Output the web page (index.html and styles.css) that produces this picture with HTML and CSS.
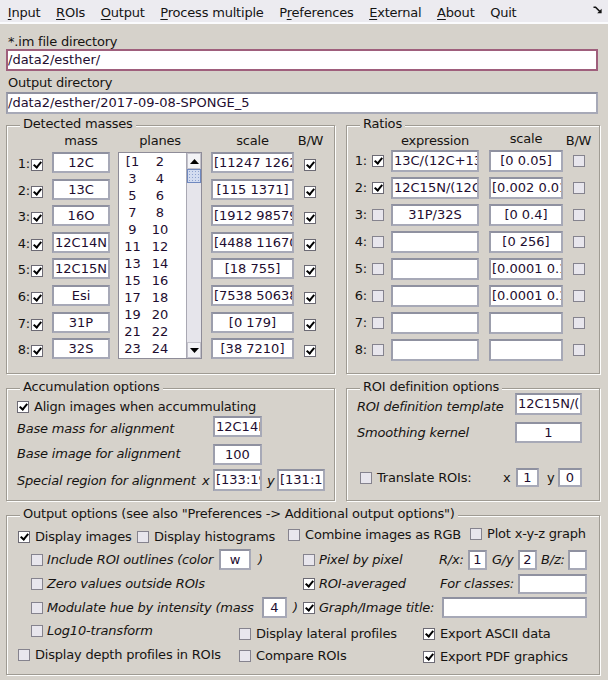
FILE: index.html
```html
<!DOCTYPE html>
<html>
<head>
<meta charset="utf-8">
<link rel="stylesheet" href="styles.css">
</head>
<body>
<div class="menubar">
  <span class="mi"><u>I</u>nput</span>
  <span class="mi"><u>R</u>OIs</span>
  <span class="mi"><u>O</u>utput</span>
  <span class="mi"><u>P</u>rocess multiple</span>
  <span class="mi">P<u>r</u>eferences</span>
  <span class="mi"><u>E</u>xternal</span>
  <span class="mi"><u>A</u>bout</span>
  <span class="mi">Quit</span>
  <svg class="dock" width="10" height="8" viewBox="0 0 10 8"><path d="M0.5 1.2H2.6L6.6 5.2" fill="none" stroke="#111" stroke-width="1.6"/><path d="M4.2 7.2H8.6V2.8Z" fill="#111"/></svg>
</div>
<div class="main">
  <div class="lbl">*.im file directory</div>
  <div class="edit wide focus">/data2/esther/</div>
  <div class="lbl lbl2">Output directory</div>
  <div class="edit wide">/data2/esther/2017-09-08-SPONGE_5</div>

  <div class="frames">
    <div class="frame masses">
      <span class="legend">Detected masses</span>
      <div class="mgrid">
        <div class="hsp"></div>
        <div class="hd w58">mass</div>
        <div class="hd w84">planes</div>
        <div class="hd w83">scale</div>
        <div class="hd w13">B/W</div>

        <div class="plist">
          <div class="pitems">
            <div class="pl"><span>[1</span><span>2</span></div>
            <div class="pl"><span>3</span><span>4</span></div>
            <div class="pl"><span>5</span><span>6</span></div>
            <div class="pl"><span>7</span><span>8</span></div>
            <div class="pl"><span>9</span><span>10</span></div>
            <div class="pl"><span>11</span><span>12</span></div>
            <div class="pl"><span>13</span><span>14</span></div>
            <div class="pl"><span>15</span><span>16</span></div>
            <div class="pl"><span>17</span><span>18</span></div>
            <div class="pl"><span>19</span><span>20</span></div>
            <div class="pl"><span>21</span><span>22</span></div>
            <div class="pl"><span>23</span><span>24</span></div>
          </div>
          <div class="sb">
            <div class="sbtn"><svg width="9" height="5" viewBox="0 0 9 5"><path d="M0 5H9L4.5 0Z" fill="#000"/></svg></div>
            <div class="thumb"></div>
            <div class="track"></div>
            <div class="sbtn"><svg width="9" height="5" viewBox="0 0 9 5"><path d="M0 0H9L4.5 5Z" fill="#000"/></svg></div>
          </div>
        </div>

        <div class="rl">1:</div><div class="cb on mcb"></div><div class="edit w58">12C</div><div class="edit w83">[11247 1262</div><div class="cb on mcb"></div>
        <div class="rl">2:</div><div class="cb on mcb"></div><div class="edit w58">13C</div><div class="edit w83">[115 1371]</div><div class="cb on mcb"></div>
        <div class="rl">3:</div><div class="cb on mcb"></div><div class="edit w58">16O</div><div class="edit w83">[1912 98579</div><div class="cb on mcb"></div>
        <div class="rl">4:</div><div class="cb on mcb"></div><div class="edit w58">12C14N</div><div class="edit w83">[4488 11670</div><div class="cb on mcb"></div>
        <div class="rl">5:</div><div class="cb on mcb"></div><div class="edit w58">12C15N</div><div class="edit w83">[18 755]</div><div class="cb on mcb"></div>
        <div class="rl">6:</div><div class="cb on mcb"></div><div class="edit w58">Esi</div><div class="edit w83">[7538 50638</div><div class="cb on mcb"></div>
        <div class="rl">7:</div><div class="cb on mcb"></div><div class="edit w58">31P</div><div class="edit w83">[0 179]</div><div class="cb on mcb"></div>
        <div class="rl">8:</div><div class="cb on mcb"></div><div class="edit w58">32S</div><div class="edit w83">[38 7210]</div><div class="cb on mcb"></div>
      </div>
    </div>

    <div class="frame ratios">
      <span class="legend">Ratios</span>
      <div class="rgrid">
        <div class="hsp"></div>
        <div class="hd w88">expression</div>
        <div class="hd w74 hup">scale</div>
        <div class="hd w13">B/W</div>

        <div class="rl rrl">1:</div><div class="cb on rcb"></div><div class="edit w88 h22">13C/(12C+13</div><div class="edit w74 h22">[0 0.05]</div><div class="cb rcb"></div>
        <div class="rl rrl">2:</div><div class="cb on rcb"></div><div class="edit w88 h22">12C15N/(12C</div><div class="edit w74 h22">[0.002 0.01</div><div class="cb rcb"></div>
        <div class="rl rrl">3:</div><div class="cb rcb"></div><div class="edit w88 h22">31P/32S</div><div class="edit w74 h22">[0 0.4]</div><div class="cb rcb"></div>
        <div class="rl rrl">4:</div><div class="cb rcb"></div><div class="edit w88 h22"></div><div class="edit w74 h22">[0 256]</div><div class="cb rcb"></div>
        <div class="rl rrl">5:</div><div class="cb rcb"></div><div class="edit w88 h22"></div><div class="edit w74 h22">[0.0001 0.1</div><div class="cb rcb"></div>
        <div class="rl rrl">6:</div><div class="cb rcb"></div><div class="edit w88 h22"></div><div class="edit w74 h22">[0.0001 0.1</div><div class="cb rcb"></div>
        <div class="rl rrl">7:</div><div class="cb rcb"></div><div class="edit w88 h22"></div><div class="edit w74 h22"></div><div class="cb rcb"></div>
        <div class="rl rrl">8:</div><div class="cb rcb"></div><div class="edit w88 h22"></div><div class="edit w74 h22"></div><div class="cb rcb"></div>
      </div>
    </div>
  </div>

  <div class="frames lower">
    <div class="frame accum">
      <span class="legend">Accumulation options</span>
      <div class="arow ra">
        <div class="chk"><div class="cb on"></div><span>Align images when accummulating</span></div>
      </div>
      <div class="arow">
        <div class="al pt3">Base mass for alignment</div>
        <div class="edit w49">12C14N</div>
      </div>
      <div class="arow rc">
        <div class="al pb3">Base image for alignment</div>
        <div class="edit w49">100</div>
      </div>
      <div class="arow rd">
        <div class="al al2">Special region for alignment</div>
        <div class="xl2">x</div>
        <div class="edit w49 h22">[133:190]</div>
        <div class="yl">y</div>
        <div class="edit w48 h22">[131:188]</div>
      </div>
    </div>

    <div class="frame roidef">
      <span class="legend">ROI definition options</span>
      <div class="arow q1">
        <div class="ql pt4">ROI definition template</div>
        <div class="edit w67 h22">12C15N/(12C</div>
      </div>
      <div class="arow q2">
        <div class="ql">Smoothing kernel</div>
        <div class="edit w67">1</div>
      </div>
      <div class="arow q3">
        <div class="chk w156 pl13"><div class="cb"></div><span>Translate ROIs:</span></div>
        <div class="xl">x</div>
        <div class="edit w23 h19">1</div>
        <div class="yl2">y</div>
        <div class="edit w24 h19">0</div>
      </div>
    </div>
  </div>

  <div class="frame outp">
    <span class="legend">Output options (see also "Preferences -&gt; Additional output options")</span>
    <div class="orow o1">
      <div class="sp11"></div>
      <div class="chk w119"><div class="cb on"></div><span>Display images</span></div>
      <div class="chk w151"><div class="cb"></div><span>Display histograms</span></div>
      <div class="chk w182 up2"><div class="cb"></div><span>Combine images as RGB</span></div>
      <div class="chk up3"><div class="cb"></div><span>Plot x-y-z graph</span></div>
    </div>
    <div class="orow o2">
      <div class="sp24"></div>
      <div class="chk w188 it"><div class="cb"></div><span>Include ROI outlines (color</span></div>
      <div class="edit w32">w</div>
      <div class="par w52">)</div>
      <div class="chk w136 it"><div class="cb"></div><span>Pixel by pixel</span></div>
      <div class="itl w29">R/x:</div>
      <div class="edit w19 h20">1</div>
      <div class="itl w31 pl5">G/y</div>
      <div class="edit w19 h20">2</div>
      <div class="itl w31 pl4">B/z:</div>
      <div class="edit w19 h20"></div>
    </div>
    <div class="orow o3">
      <div class="sp24"></div>
      <div class="chk w272 it"><div class="cb"></div><span>Zero values outside ROIs</span></div>
      <div class="chk w136 it"><div class="cb on"></div><span>ROI-averaged</span></div>
      <div class="itl w79 pl1">For classes:</div>
      <div class="edit w69 h20"></div>
    </div>
    <div class="orow o3">
      <div class="sp24"></div>
      <div class="chk w231 it"><div class="cb"></div><span>Modulate hue by intensity (mass</span></div>
      <div class="edit w25">4</div>
      <div class="par w16 pl6">)</div>
      <div class="chk w139 it"><div class="cb on"></div><span>Graph/Image title:</span></div>
      <div class="edit w145"></div>
    </div>
    <div class="orow o2">
      <div class="sp24"></div>
      <div class="chk w208 it"><div class="cb"></div><span>Log10-transform</span></div>
      <div class="chk w184 dn3"><div class="cb"></div><span>Display lateral profiles</span></div>
      <div class="chk dn3"><div class="cb on"></div><span>Export ASCII data</span></div>
    </div>
    <div class="orow o3">
      <div class="sp11"></div>
      <div class="chk w221"><div class="cb"></div><span>Display depth profiles in ROIs</span></div>
      <div class="chk w184 dn1"><div class="cb"></div><span>Compare ROIs</span></div>
      <div class="chk dn2"><div class="cb on"></div><span>Export PDF graphics</span></div>
    </div>
  </div>
</div>
</body>
</html>
```
FILE: styles.css
```css
* { box-sizing: border-box; }
html, body { margin: 0; padding: 0; }
body {
  width: 608px;
  height: 680px;
  overflow: hidden;
  background: #d6d2cb;
  font-family: "DejaVu Sans", sans-serif;
  font-size: 13px;
  line-height: 15px;
  letter-spacing: -0.2px;
  color: #161412;
}

/* menu bar */
.menubar {
  height: 24px;
  background: #ecebf0;
  border-bottom: 2px solid #fbfbfd;
  display: flex;
  align-items: center;
  padding-top: 2px;
}
.mi { padding: 0 7.8px; color: #141414; white-space: nowrap; }
.mi u { text-decoration-thickness: 1px; text-underline-offset: 2px; }
.dock { margin-left: auto; margin-right: 5px; margin-top: -4px; }

.main { padding-left: 6px; }
.lbl { margin-top: 10px; padding-left: 2px; height: 15px; }
.lbl2 { margin-top: 4px; margin-bottom: 2px; }

/* edit boxes */
.edit {
  flex: none;
  background: #fff;
  border: 2px solid #a7a9b7;
  border-top-color: #8f91a0;
  border-left-color: #9c9eac;
  height: 21px;
  line-height: 17px;
  text-align: center;
  white-space: nowrap;
  overflow: hidden;
  color: #1e0d30;
  padding: 0 1px;
  letter-spacing: 0;
  align-self: start;
}
.orow .edit, .arow .edit { align-self: center; }
.wide { width: 592px; height: 22px; line-height: 18px; text-align: left; padding: 0; }
.focus { border-color: #9f5f7c; }
.h22 { height: 22px; line-height: 18px; }
.h20 { height: 20px; line-height: 16px; }
.h19 { height: 19px; line-height: 15px; }

.w13 { width: 13px; }
.w16 { width: 16px; }
.w19 { width: 19px; }
.w23 { width: 23px; }
.w24 { width: 24px; }
.w25 { width: 25px; }
.w29 { width: 29px; }
.w31 { width: 31px; }
.w32 { width: 32px; }
.w48 { width: 48px; }
.w49 { width: 49px; }
.w52 { width: 52px; }
.w58 { width: 58px; }
.w67 { width: 67px; }
.w69 { width: 69px; }
.w74 { width: 74px; }
.w79 { width: 79px; }
.w83 { width: 83px; }
.w84 { width: 84px; }
.w88 { width: 88px; }
.w119 { width: 119px; }
.w136 { width: 136px; }
.w139 { width: 139px; }
.w145 { width: 145px; }
.w151 { width: 151px; }
.w156 { width: 156px; }
.w182 { width: 182px; }
.w184 { width: 184px; }
.w188 { width: 188px; }
.w208 { width: 208px; }
.w221 { width: 221px; }
.w231 { width: 231px; }
.w272 { width: 272px; }
.pl1 { padding-left: 1px; }
.pl4 { padding-left: 4px; }
.pl5 { padding-left: 5px; }
.pl6 { padding-left: 6px; }
.pl13 { padding-left: 13px; }
.pt3 { padding-top: 3px; }
.pt4 { padding-top: 4px; }
.pb3 { padding-bottom: 3px; }

/* checkbox */
.cb {
  flex: none;
  position: relative;
  width: 12px;
  height: 12px;
  border: 1px solid #85838e;
  background: #e8e6ed;
}
.cb.on { background: #fff; border-color: #6c6a74; }
.cb.on::after {
  content: "";
  position: absolute;
  left: 3px;
  top: 0px;
  width: 3px;
  height: 6px;
  border: solid #000;
  border-width: 0 2px 2px 0;
  transform: rotate(40deg);
}

/* frames */
.frames { display: flex; gap: 11px; margin-top: 11px; }
.frames.lower { margin-top: 14px; }
.frame {
  position: relative;
  flex: none;
  border: 1px solid #9f9b93;
  box-shadow: inset 1px 1px 0 #fdfdfc, 1px 1px 0 #fdfdfc;
}
.legend {
  position: absolute;
  left: 13px;
  top: -10px;
  padding: 0 3px;
  background: #d6d2cb;
  line-height: 15px;
  white-space: nowrap;
}
.masses { width: 329px; height: 249px; }
.ratios { width: 254px; height: 249px; }
.accum { width: 329px; height: 113px; }
.roidef { width: 254px; height: 113px; }
.outp { width: 594px; height: 160px; margin-top: 14px; }

/* detected masses / ratios grids */
.mgrid {
  display: grid;
  grid-template-columns: 24px 21px 66px 93px 93px 13px;
  grid-template-rows: 26px repeat(8, 26.6px);
}
.rgrid {
  display: grid;
  grid-template-columns: 24px 20px 98px 83px 13px;
  grid-template-rows: 24px repeat(8, 27px);
}
.hsp { grid-column: span 2; }
.hd {
  display: flex;
  justify-content: center;
  padding-top: 7px;
  white-space: nowrap;
}
.hup { padding-top: 5px; }
.rl { text-align: right; padding-top: 4px; padding-right: 1px; }
.rrl { padding-top: 3px; padding-right: 4px; }
.mcb { margin-top: 7px; }
.rcb { margin-top: 5px; margin-left: 1px; }

/* planes listbox */
.plist {
  grid-column: 4;
  grid-row: 2 / span 8;
  width: 84px;
  height: 207px;
  display: flex;
  border: 1px solid #8e8c98;
  background: #fff;
  align-self: start;
}
.pitems { flex: 1; overflow: hidden; color: #1e0d30; letter-spacing: 0; }
.pl {
  display: grid;
  grid-template-columns: 27px 28px;
  height: 17px;
  line-height: 17px;
  text-align: center;
}
.sb {
  width: 15px;
  display: flex;
  flex-direction: column;
  background: #e6e5eb;
  border-left: 1px solid #a9a8b3;
}
.sbtn {
  height: 16px;
  display: flex;
  align-items: center;
  justify-content: center;
  background: #f3f3f6;
  border: 1px solid #c3c2cb;
}
.thumb {
  height: 14px;
  border: 1px solid #6f88bf;
  background-color: #d3dcf0;
  background-image: radial-gradient(circle, #8ea2cf 0.7px, transparent 0.9px);
  background-size: 3px 3px;
}
.track { flex: 1; }

/* accumulation / roi rows */
.arow { display: flex; align-items: center; height: 21px; }
.ra { margin-top: 8px; height: 19px; padding-left: 10px; }
.rc { margin-top: 7px; }
.rd { margin-top: 4px; height: 22px; }
.al { width: 206px; padding-left: 10px; font-style: italic; white-space: nowrap; flex: none; }
.al2 { width: 195px; }
.xl2 { width: 11px; font-style: italic; flex: none; }
.yl { width: 15px; padding-left: 5px; font-style: italic; flex: none; }
.q1 { margin-top: 4px; height: 22px; }
.q2 { margin-top: 7px; }
.q3 { margin-top: 25px; height: 19px; }
.ql { width: 168px; padding-left: 10px; font-style: italic; white-space: nowrap; flex: none; }
.xl { width: 13px; flex: none; }
.yl2 { width: 19px; padding-left: 8px; flex: none; }

/* output options */
.orow { display: flex; align-items: center; height: 21px; }
.o1 { margin-top: 10px; }
.o2 { margin-top: 2px; }
.o3 { margin-top: 3px; }
.sp11 { width: 11px; flex: none; }
.sp24 { width: 24px; flex: none; }
.chk { display: flex; align-items: center; gap: 5px; flex: none; white-space: nowrap; }
.chk.it span { font-style: italic; }
.it .cb + span { margin-left: -1px; }
.itl { font-style: italic; white-space: nowrap; flex: none; }
.par { font-style: italic; padding-left: 7px; flex: none; }
.par.pl6 { padding-left: 6px; }
.up2 { padding-bottom: 4px; }
.up3 { padding-bottom: 6px; }
.dn1 { padding-top: 2px; }
.dn2 { padding-top: 4px; }
.dn3 { padding-top: 6px; }
```
